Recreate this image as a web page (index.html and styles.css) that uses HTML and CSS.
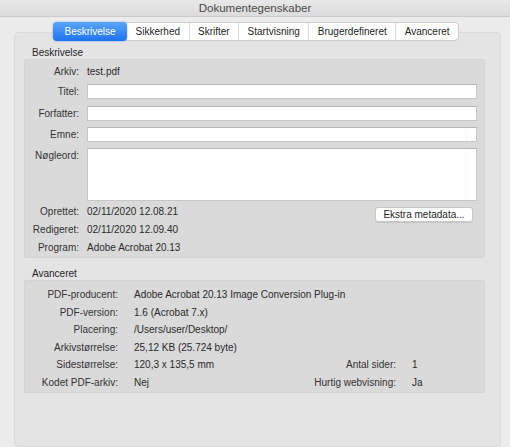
FILE: index.html
```html
<!DOCTYPE html>
<html lang="da">
<head>
    <meta charset="UTF-8">
    <title>Dokumentegenskaber</title>
    <link rel="stylesheet" href="styles.css">
</head>
<body>

<div class="titlebar">Dokumentegenskaber</div>

<div class="tabs">
    <span class="tab active">Beskrivelse</span>
    <span class="tab">Sikkerhed</span>
    <span class="tab">Skrifter</span>
    <span class="tab">Startvisning</span>
    <span class="tab">Brugerdefineret</span>
    <span class="tab">Avanceret</span>
</div>

<div class="tabbox">

    <!-- beskrivelse -->
    <div class="group-title">Beskrivelse</div>
    <div class="group desc">
        <span class="lbl">Arkiv:</span>
        <span class="val">test.pdf</span>

        <span class="lbl in">Titel:</span>
        <input type="text" class="field">

        <span class="lbl in">Forfatter:</span>
        <input type="text" class="field">

        <span class="lbl in">Emne:</span>
        <input type="text" class="field scroll">

        <span class="lbl in">Nøgleord:</span>
        <textarea class="field scroll area"></textarea>

        <span class="lbl">Oprettet:</span>
        <div class="val with-btn">
            <span>02/11/2020 12.08.21</span>
            <button class="btn">Ekstra metadata...</button>
        </div>

        <span class="lbl">Redigeret:</span>
        <span class="val">02/11/2020 12.09.40</span>

        <span class="lbl">Program:</span>
        <span class="val">Adobe Acrobat 20.13</span>
    </div>

    <!-- avanceret -->
    <div class="group-title second">Avanceret</div>
    <div class="group adv">
        <span class="lbl">PDF-producent:</span>
        <span class="val wide">Adobe Acrobat 20.13 Image Conversion Plug-in</span>

        <span class="lbl">PDF-version:</span>
        <span class="val wide">1.6 (Acrobat 7.x)</span>

        <span class="lbl">Placering:</span>
        <span class="val wide">/Users/user/Desktop/</span>

        <span class="lbl">Arkivstørrelse:</span>
        <span class="val wide">25,12 KB (25.724 byte)</span>

        <span class="lbl">Sidestørrelse:</span>
        <span class="val">120,3 x 135,5 mm</span>
        <span class="lbl">Antal sider:</span>
        <span class="val">1</span>

        <span class="lbl">Kodet PDF-arkiv:</span>
        <span class="val">Nej</span>
        <span class="lbl">Hurtig webvisning:</span>
        <span class="val">Ja</span>
    </div>

</div>

</body>
</html>
```

FILE: styles.css
```css
body {
    margin: 0;
    width: 510px;
    height: 447px;
    overflow: hidden;
    background-color: #ececec;
    font-family: "Liberation Sans", Arial, sans-serif;
    font-size: 10px;
    color: #2a2a2a;
}
.titlebar {
    height: 17px;
    line-height: 17px;
    text-align: center;
    font-size: 11.5px;
    color: #4a4a4a;
    background: linear-gradient(#e8e8e8, #dcdcdc);
    border-bottom: 1px solid #cbcbcb;
    box-sizing: border-box;
}

/* faner */
.tabs {
    display: flex;
    margin: 6px 0 -8px 54px;
    width: 404px;
    height: 17px;
    position: relative;
    z-index: 1;
    background: #fff;
    border-radius: 4px;
    box-shadow: 0 0 0 1px #cdcdcd, 0 1px 1px rgba(0, 0, 0, 0.12);
}
.tab {
    flex: 1 1 auto;
    text-align: center;
    line-height: 17px;
    padding: 0 8px;
    color: #262626;
    border-left: 1px solid #dadada;
}
.tab:first-child {
    border-left: none;
}
.tab.active + .tab {
    border-left: none;
}
.tab.active {
    color: #fff;
    padding: 0 11px;
    background: linear-gradient(#5aa6fb, #1f72ee);
    border-radius: 4px;
    margin: -1px 0 -1px -1px;
    line-height: 19px;
    box-shadow: 0 0 2px rgba(40, 110, 230, 0.6);
}

.tabbox {
    margin-left: 14px;
    width: 487px;
    height: 415px;
    box-sizing: border-box;
    background-color: #e4e4e4;
    border: 1px solid #dadada;
    border-radius: 4px;
    padding: 13px 15px 0 9px;
}
.group-title {
    line-height: 13px;
    margin-left: 8px;
    color: #262626;
}
.group-title.second {
    margin-top: 9px;
}
.group {
    background-color: #dadada;
    border: 1px solid #d4d4d4;
    border-radius: 2px;
    box-sizing: border-box;
    display: grid;
}
.lbl {
    text-align: right;
    color: #333;
    white-space: nowrap;
}

/* beskrivelse */
.desc {
    height: 199px;
    padding: 3px 7px 0 0;
    grid-template-columns: 54px 1fr;
    grid-template-rows: 21px 22px 21px 21px 55px 18px 18px 18px;
    column-gap: 8px;
    align-items: start;
}
.desc .lbl, .desc .val {
    line-height: 18px;
}
.desc .lbl.in {
    line-height: 15px;
}
.field {
    display: block;
    width: 100%;
    height: 15px;
    margin: 0;
    padding: 0 3px;
    box-sizing: border-box;
    border: 1px solid #c6c6c6;
    border-top-color: #b4b4b4;
    background-color: #fff;
    font: inherit;
    outline: none;
}
.field.scroll {
    background: linear-gradient(to right, #fff calc(100% - 10px), #f1f1f1 calc(100% - 10px), #fff calc(100% - 9px));
}
.field.area {
    height: 53px;
    resize: none;
}
.with-btn {
    display: flex;
    justify-content: space-between;
    align-items: flex-start;
}
.btn {
    margin: 4px 4px 0 0;
    width: 98px;
    height: 15px;
    padding: 0;
    font: inherit;
    color: #262626;
    background-color: #fff;
    border: 1px solid #c8c8c8;
    border-radius: 3px;
    box-shadow: 0 1px 1px rgba(0, 0, 0, 0.1);
    line-height: 13px;
}

/* avanceret */
.adv {
    height: 113px;
    padding-top: 5px;
    grid-template-columns: 93px 1fr auto 72px;
    grid-auto-rows: 17.6px;
    column-gap: 16px;
    line-height: 17.6px;
}
.adv .wide {
    grid-column: 2 / -1;
}
```
